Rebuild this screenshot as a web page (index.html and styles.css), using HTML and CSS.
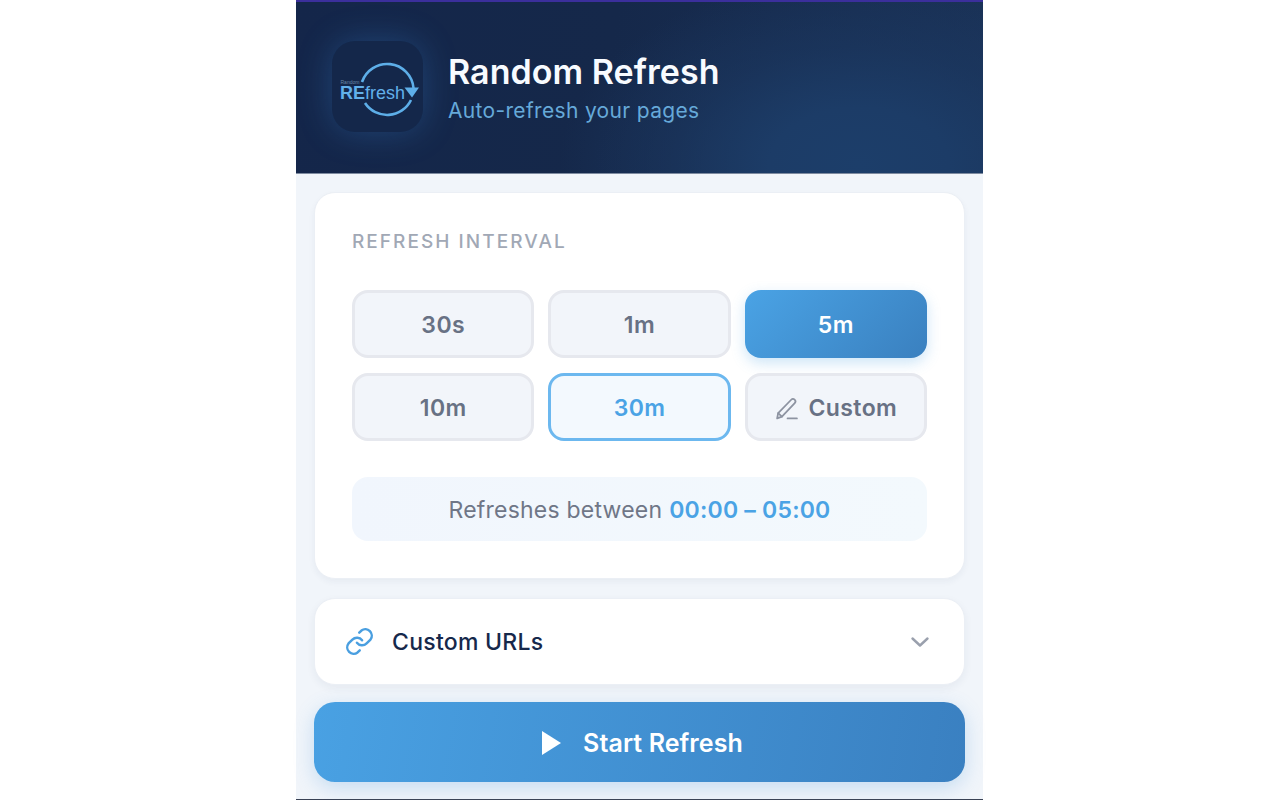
FILE: index.html
```html
<!DOCTYPE html>
<html lang="en">
<head>
<meta charset="utf-8">
<title>Random Refresh</title>
<link rel="stylesheet" href="styles.css">
</head>
<body>
<div class="panel">
  <header class="header">
    <div class="logo">
      <svg class="logo-svg" viewBox="0 0 91 91" width="91" height="91">
        <path d="M30 41 A26.5 26.5 0 0 1 81.5 47" fill="none" stroke="#5daee8" stroke-width="2.6"/>
        <path d="M79 59 A26.5 26.5 0 0 1 33 62" fill="none" stroke="#5daee8" stroke-width="2.6"/>
        <path d="M72.5 46.5 H87 L80 56.5 Z" fill="#5daee8"/>
        <text class="logo-small" x="8.5" y="43">Random</text>
        <text class="logo-re" x="8" y="58">RE<tspan class="logo-fresh">fresh</tspan></text>
      </svg>
    </div>
    <div class="titles">
      <h1 class="title">Random Refresh</h1>
      <p class="subtitle">Auto-refresh your pages</p>
    </div>
  </header>
  <main class="main">
    <section class="card interval">
      <h2 class="label">REFRESH INTERVAL</h2>
      <div class="options">
        <button class="opt">30s</button>
        <button class="opt">1m</button>
        <button class="opt opt-active">5m</button>
        <button class="opt">10m</button>
        <button class="opt opt-hover">30m</button>
        <button class="opt">
          <svg class="pencil" viewBox="0 0 24 24" width="25" height="25" fill="none" stroke="#8d93a1" stroke-width="1.7" stroke-linecap="round" stroke-linejoin="round"><path d="M3 21.5l1-5L16.5 3.6a2.3 2.3 0 0 1 3.4 3.2L7.6 19.8 3 21.5z"/><path d="M4 16.5l3.6 3.3"/><path d="M13 21.5h9"/></svg>
          Custom
        </button>
      </div>
      <div class="range">Refreshes between <span class="range-val">00:00 – 05:00</span></div>
    </section>
    <section class="card urls">
      <svg class="link" viewBox="0 0 24 24" width="31" height="31" fill="none" stroke="#4a9fe0" stroke-width="1.9" stroke-linecap="round" stroke-linejoin="round"><path d="M10 13a5 5 0 0 0 7.5.5l3-3a5 5 0 0 0-7-7l-1.7 1.7"/><path d="M14 11a5 5 0 0 0-7.5-.5l-3 3a5 5 0 0 0 7 7l1.7-1.7"/></svg>
      <span class="urls-text">Custom URLs</span>
      <svg class="chev" viewBox="0 0 20 12" width="20" height="12" fill="none" stroke="#9aa0ad" stroke-width="2.4" stroke-linecap="round" stroke-linejoin="round"><path d="M2.5 2.5L10 9.5l7.5-7"/></svg>
    </section>
    <button class="start">
      <svg class="play" viewBox="0 0 20 24" width="20" height="24"><path d="M0 0L19 12 0 24Z" fill="#fff"/></svg>
      Start Refresh
    </button>
  </main>
</div>
</body>
</html>
```
FILE: styles.css
```css
* { box-sizing: border-box; }
html, body { margin: 0; height: 100%; background: #fff; }
body { font-family: Inter, "Liberation Sans", sans-serif; overflow: hidden; }
.panel {
  width: 687px;
  height: 800px;
  margin-left: 296px;
  background: #f1f5fa;
  border-bottom: 1px solid #3a4254;
  display: flex;
  flex-direction: column;
}
.header {
  height: 174px;
  flex: none;
  display: flex;
  align-items: center;
  gap: 25px;
  padding: 0 36px;
  border-top: 2px solid #3b2f9c;
  border-bottom: 1px solid #7e8ba0;
  background:
    radial-gradient(ellipse 300px 190px at 82% 95%, #1c3e6a 0, #1c3c67 30%, rgba(28,58,100,.5) 62%, rgba(28,58,100,0) 100%),
    linear-gradient(100deg, #14264a 0%, #15284a 45%, #1a3257 100%);
}
.logo {
  width: 91px;
  height: 91px;
  flex: none;
  margin-top: -2px;
  border-radius: 23px;
  background: #14274a;
  box-shadow: 0 0 34px rgba(60,140,220,.3);
}
.logo-svg { display: block; }
.logo-small { font: 400 5px "Liberation Sans", sans-serif; fill: #6a89a8; }
.logo-re { font: 700 18px "Liberation Sans", sans-serif; fill: #62b0ea; }
.logo-fresh { font-size: 18px; font-weight: 400; }
.titles { display: flex; flex-direction: column; gap: 5px; }
.title {
  margin: 0;
  font-size: 34px;
  line-height: 42px;
  font-weight: 600;
  letter-spacing: .05px;
  color: #f8fbff;
}
.subtitle {
  margin: 0;
  font-size: 21px;
  line-height: 26px;
  letter-spacing: .33px;
  color: #66a9d9;
}
.main {
  flex: 1;
  display: flex;
  flex-direction: column;
  padding: 18px 18px 0;
}
.card {
  background: #fff;
  border: 1px solid #ebeff5;
  border-radius: 21px;
  box-shadow: 0 3px 6px rgba(30,50,90,.05);
}
.interval {
  height: 387px;
  padding: 38px 37px 0;
}
.label {
  margin: 0;
  font-size: 19px;
  line-height: 22px;
  font-weight: 500;
  letter-spacing: 2.05px;
  color: #a1a8b5;
}
.options {
  display: grid;
  grid-template-columns: repeat(3, 1fr);
  gap: 15px 14px;
  margin-top: 37px;
}
.opt {
  height: 68px;
  display: flex;
  align-items: center;
  justify-content: center;
  gap: 9px;
  padding: 2px 0 0;
  font-family: inherit;
  font-size: 23px;
  font-weight: 600;
  letter-spacing: .4px;
  color: #687184;
  background: #f2f5fa;
  border: 3px solid #e6e8ee;
  border-radius: 16px;
}
.opt-active {
  color: #fff;
  border: 0;
  background: linear-gradient(135deg, #4aa3e5 0%, #3a80bf 100%);
  box-shadow: 0 5px 14px rgba(74,160,228,.28);
}
.opt-hover {
  color: #4aa3e5;
  background: #f3f9fe;
  border-color: #6cb8ef;
}
.range {
  height: 64px;
  margin-top: 36px;
  padding-top: 2px;
  display: flex;
  align-items: center;
  justify-content: center;
  gap: 7px;
  font-size: 23px;
  letter-spacing: .22px;
  color: #6f7687;
  background: linear-gradient(90deg, #f1f6fd, #f3f9fd);
  border-radius: 16px;
}
.range-val { color: #4aa3e5; font-weight: 600; }
.urls {
  height: 87px;
  margin-top: 19px;
  display: flex;
  align-items: center;
  padding: 0 34px 0 29px;
  box-shadow: 0 3px 8px rgba(30,50,90,.06);
}
.urls-text {
  margin-left: 17px;
  flex: 1;
  font-size: 23px;
  font-weight: 500;
  letter-spacing: .27px;
  color: #16284b;
}
.start {
  height: 80px;
  margin-top: 17px;
  flex: none;
  display: flex;
  align-items: center;
  justify-content: center;
  gap: 21px;
  padding: 1px 0 0 6px;
  font-family: inherit;
  font-size: 25px;
  font-weight: 600;
  letter-spacing: .08px;
  color: #fff;
  border: 0;
  border-radius: 21px;
  background: linear-gradient(100deg, #49a1e3 0%, #3a80c1 100%);
  box-shadow: 0 6px 20px rgba(74,150,220,.26);
}
```
